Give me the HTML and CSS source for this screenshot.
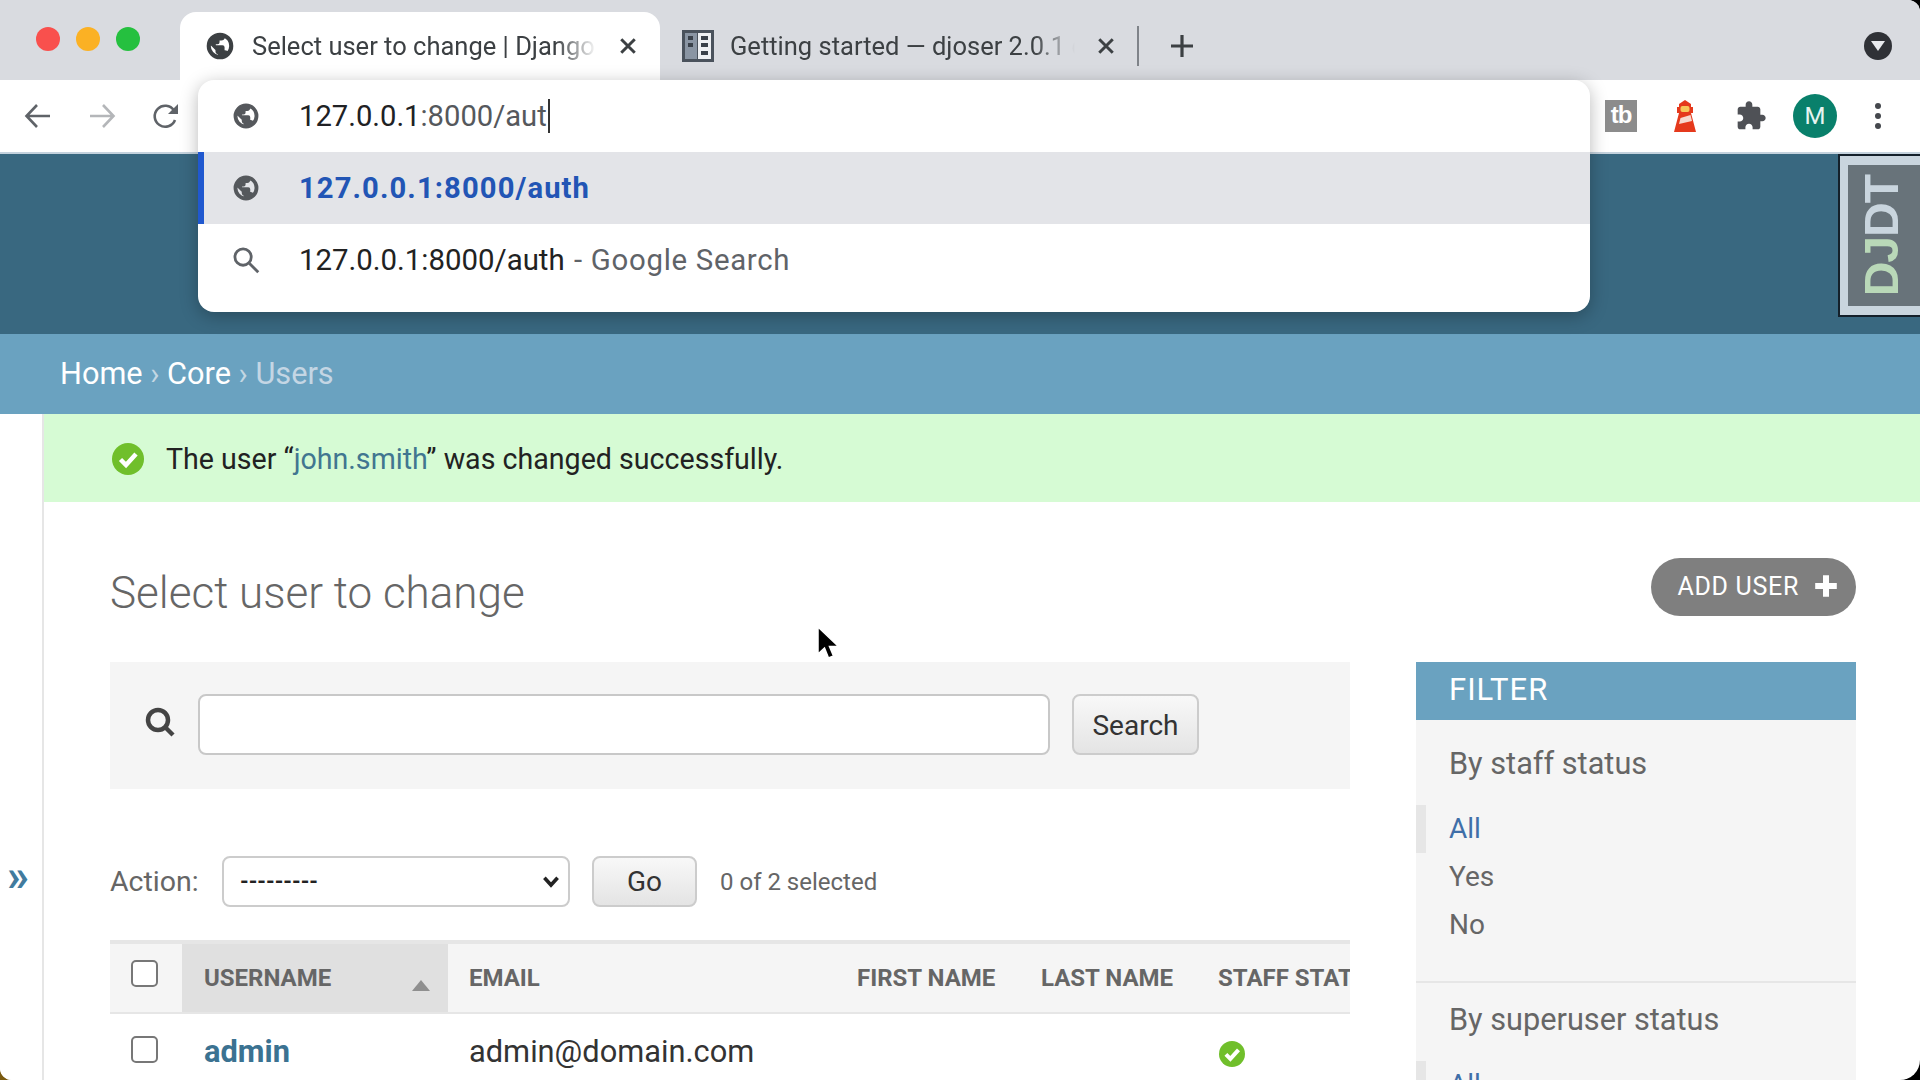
FILE: index.html
```html
<!DOCTYPE html>
<html lang="en">
<head>
  <meta charset="UTF-8">
  <title>Select user to change | Django site admin</title>
  <link rel="stylesheet" href="styles.css">
</head>
<body>
  <div class="window">
    <!-- browser tabs -->
    <div class="tabstrip">
      <div class="lights">
        <span class="light red"></span><span class="light yellow"></span><span class="light green"></span>
      </div>
      <div class="tab active">
        <svg class="globe" viewBox="0 0 24 24"><path d="M12 2C6.48 2 2 6.48 2 12s4.48 10 10 10 10-4.48 10-10S17.52 2 12 2zm-1 17.93c-3.95-.49-7-3.85-7-7.93 0-.62.08-1.21.21-1.79L9 15v1c0 1.1.9 2 2 2v1.93zm6.9-2.54c-.26-.81-1-1.39-1.9-1.39h-1v-3c0-.55-.45-1-1-1H8v-2h2c.55 0 1-.45 1-1V7h2c1.1 0 2-.9 2-2v-.41c2.93 1.19 5 4.06 5 7.41 0 2.08-.8 3.97-2.1 5.39z"/></svg>
        <span class="tab-title">Select user to change | Django site admin</span>
        <svg class="tab-close" viewBox="0 0 16 16"><path d="M2 2l12 12M14 2L2 14"/></svg>
      </div>
      <div class="tab other">
        <svg class="book" viewBox="0 0 32 32"><rect width="32" height="32" fill="#4a525c"/><rect x="3" y="3" width="12" height="26" fill="#8a95a3"/><rect x="16" y="3" width="13" height="26" fill="#eef0f3"/><rect x="6" y="6" width="5" height="4" fill="#3a414a"/><rect x="6" y="13" width="5" height="4" fill="#3a414a"/><rect x="19" y="6" width="7" height="4" fill="#3a414a"/><rect x="19" y="13" width="7" height="4" fill="#3a414a"/><rect x="19" y="21" width="7" height="4" fill="#3a414a"/></svg>
        <span class="tab-title">Getting started — djoser 2.0.1 documentation</span>
        <svg class="tab-close" viewBox="0 0 16 16"><path d="M2 2l12 12M14 2L2 14"/></svg>
      </div>
      <span class="tab-sep"></span>
      <svg class="new-tab" viewBox="0 0 24 24"><path d="M12 1v22M1 12h22"/></svg>
      <span class="tab-search"><svg viewBox="0 0 14 10"><path d="M0 0h14L7 10z"/></svg></span>
    </div>

    <!-- toolbar -->
    <div class="toolbar">
      <svg class="nav back" viewBox="0 0 28 28"><path d="M26 14H3M13 3L2.5 14 13 25"/></svg>
      <svg class="nav forward" viewBox="0 0 28 28"><path d="M2 14h23M15 3l10.5 11L15 25"/></svg>
      <svg class="nav reload" viewBox="0 0 28 28"><path d="M23 18a10.5 10.5 0 1 1-1-9.5"/><path class="fill" d="M26 2v10H16z"/></svg>
      <div class="extensions">
        <span class="ext-tb">tb</span>
        <svg class="ext-light" viewBox="0 0 22 32"><path fill="#e5391c" d="M11 0l6 4v3h2v6h-2l5 19H0L5 13H3V7h2V4z"/><rect x="6.5" y="6" width="9" height="6" rx="2" fill="#f7c65a"/><path fill="#f6d9cf" d="M5 24l1.5-6 10-3 1.5 6z"/></svg>
        <svg class="ext-puzzle" viewBox="0 0 24 24"><path d="M20.5 11H19V7c0-1.1-.9-2-2-2h-4V3.5C13 2.12 11.88 1 10.5 1S8 2.12 8 3.5V5H4c-1.1 0-1.99.9-1.99 2v3.8H3.5c1.49 0 2.7 1.21 2.7 2.7s-1.21 2.7-2.7 2.7H2V20c0 1.1.9 2 2 2h3.8v-1.5c0-1.49 1.21-2.7 2.7-2.7 1.49 0 2.7 1.21 2.7 2.7V22H17c1.1 0 2-.9 2-2v-4h1.5c1.38 0 2.5-1.12 2.5-2.5S21.88 11 20.5 11z"/></svg>
        <span class="avatar">M</span>
        <span class="kebab"><i></i><i></i><i></i></span>
      </div>
    </div>

    <!-- omnibox dropdown -->
    <div class="omnibox">
      <div class="omni-row omni-input">
        <svg class="globe" viewBox="0 0 24 24"><path d="M12 2C6.48 2 2 6.48 2 12s4.48 10 10 10 10-4.48 10-10S17.52 2 12 2zm-1 17.93c-3.95-.49-7-3.85-7-7.93 0-.62.08-1.21.21-1.79L9 15v1c0 1.1.9 2 2 2v1.93zm6.9-2.54c-.26-.81-1-1.39-1.9-1.39h-1v-3c0-.55-.45-1-1-1H8v-2h2c.55 0 1-.45 1-1V7h2c1.1 0 2-.9 2-2v-.41c2.93 1.19 5 4.06 5 7.41 0 2.08-.8 3.97-2.1 5.39z"/></svg>
        <span class="omni-text"><b>127.0.0.1</b>:8000/aut</span><span class="caret"></span>
      </div>
      <div class="omni-row omni-selected">
        <svg class="globe" viewBox="0 0 24 24"><path d="M12 2C6.48 2 2 6.48 2 12s4.48 10 10 10 10-4.48 10-10S17.52 2 12 2zm-1 17.93c-3.95-.49-7-3.85-7-7.93 0-.62.08-1.21.21-1.79L9 15v1c0 1.1.9 2 2 2v1.93zm6.9-2.54c-.26-.81-1-1.39-1.9-1.39h-1v-3c0-.55-.45-1-1-1H8v-2h2c.55 0 1-.45 1-1V7h2c1.1 0 2-.9 2-2v-.41c2.93 1.19 5 4.06 5 7.41 0 2.08-.8 3.97-2.1 5.39z"/></svg>
        <span class="omni-text">127.0.0.1:8000/auth</span>
      </div>
      <div class="omni-row omni-search">
        <svg class="omni-glass" viewBox="0 0 24 24"><circle cx="9.5" cy="9.5" r="7"/><path d="M15 15l7.5 7.5"/></svg>
        <span class="omni-text">127.0.0.1:8000/auth <span class="omni-dim">- Google Search</span></span>
      </div>
    </div>

    <!-- django admin -->
    <div class="site-header"></div>
    <div class="breadcrumbs"><a>Home</a> <i>›</i> <a>Core</a> <i>›</i> <span>Users</span></div>

    <div class="page">
      <div class="nav-toggle"><span>»</span></div>
      <div class="content">
        <div class="message">
          <svg class="yes-icon" viewBox="0 0 32 32"><circle cx="16" cy="16" r="16" fill="#70bf2b"/><path d="M8.5 16.5l5.5 5.5 10-11" fill="none" stroke="#fff" stroke-width="4.5"/></svg>
          <span>The user “<a>john.smith</a>” was changed successfully.</span>
        </div>

        <div class="inner">
          <div class="title-row">
            <h1>Select user to change</h1>
            <a class="add-user">ADD USER <svg viewBox="0 0 20 20"><path d="M10 1v18M1 10h18"/></svg></a>
          </div>

          <div class="changelist">
            <div class="results">
              <div class="search-panel">
                <svg class="search-icon" viewBox="0 0 30 30"><circle cx="13" cy="13" r="10"/><path d="M20 20l8 8"/></svg>
                <div class="search-input"></div>
                <div class="button search-btn">Search</div>
              </div>

              <div class="actions">
                <label>Action:</label>
                <div class="select">---------<svg viewBox="0 0 14 10"><path d="M1.5 1.5L7 7.5l5.5-6"/></svg></div>
                <div class="button go-btn">Go</div>
                <span class="counter">0 of 2 selected</span>
              </div>

              <div class="table-wrap">
                <table>
                  <colgroup>
                    <col class="col-check"><col class="col-user"><col class="col-email"><col class="col-first"><col class="col-last"><col class="col-staff">
                  </colgroup>
                  <thead>
                    <tr>
                      <th class="cell-check"><span class="checkbox"></span></th>
                      <th class="sorted">USERNAME<span class="sort-arrow"></span></th>
                      <th>EMAIL</th>
                      <th>FIRST NAME</th>
                      <th>LAST NAME</th>
                      <th>STAFF STATUS</th>
                    </tr>
                  </thead>
                  <tbody>
                    <tr>
                      <td class="cell-check"><span class="checkbox"></span></td>
                      <td><a class="user-link">admin</a></td>
                      <td>admin@domain.com</td>
                      <td></td>
                      <td></td>
                      <td class="cell-staff"><svg class="yes-small" viewBox="0 0 32 32"><circle cx="16" cy="16" r="16" fill="#70bf2b"/><path d="M8.5 16.5l5.5 5.5 10-11" fill="none" stroke="#fff" stroke-width="5"/></svg></td>
                    </tr>
                  </tbody>
                </table>
              </div>
            </div>

            <div class="filter">
              <h2>FILTER</h2>
              <div class="filter-group">
                <h3>By staff status</h3>
                <ul>
                  <li class="selected"><a>All</a></li>
                  <li>Yes</li>
                  <li>No</li>
                </ul>
              </div>
              <div class="filter-group last">
                <h3>By superuser status</h3>
                <ul>
                  <li class="selected"><a>All</a></li>
                </ul>
              </div>
            </div>
          </div>
        </div>
      </div>
    </div>

    <div class="djdt"><div class="djdt-inner"><span><em>DJ</em>DT</span></div></div>
    <svg class="cursor" viewBox="0 0 24 36"><path d="M2 1v27l6.5-6 4 10 5-2-4-9.5h9z" fill="#000" stroke="#fff" stroke-width="1.5"/></svg>
  </div>
</body>
</html>
```

FILE: styles.css
```css
* {
  box-sizing: border-box;
}

html, body {
  margin: 0;
  height: 100%;
  overflow: hidden;
}

body {
  background: linear-gradient(to right, #7a5a10 50%, #000 50%);
  font-family: Roboto, "Liberation Sans", sans-serif;
}

.window {
  position: relative;
  width: 1920px;
  height: 1080px;
  background: #fff;
  overflow: hidden;
  border-radius: 0 12px 20px 12px;
}

/* tabs */
.tabstrip {
  display: flex;
  align-items: flex-end;
  height: 80px;
  background: #d9dbe0;
}

.lights {
  display: flex;
  gap: 16px;
  align-self: flex-start;
  width: 180px;
  padding: 27px 0 0 36px;
}

.light {
  width: 24px;
  height: 24px;
  border-radius: 50%;
}

.red { background: #f9504d; }
.yellow { background: #fbb124; }
.green { background: #25c03f; }

.tab {
  display: flex;
  align-items: center;
  height: 68px;
  font-size: 25.5px;
  color: #3c4043;
}

.tab.active {
  width: 480px;
  padding: 0 23px 0 25px;
  background: #fff;
  border-radius: 16px 16px 0 0;
}

.tab.other {
  width: 477px;
  padding: 0 22px 0 22px;
}

.globe {
  width: 30px;
  height: 30px;
  flex: none;
  fill: #3c4043;
  stroke: #3c4043;
  stroke-width: 1.3;
}

.book {
  width: 32px;
  height: 32px;
  flex: none;
}

.tab-title {
  flex: 1;
  margin-left: 17px;
  overflow: hidden;
  white-space: nowrap;
  -webkit-mask-image: linear-gradient(to right, #000 88%, transparent 100%);
  mask-image: linear-gradient(to right, #000 88%, transparent 100%);
}

.tab.other .tab-title {
  margin-left: 16px;
}

.tab-close {
  width: 18px;
  height: 18px;
  margin-left: 22px;
  flex: none;
  fill: none;
  stroke: #3c4043;
  stroke-width: 2.6;
}

.tab-sep {
  width: 2px;
  height: 40px;
  margin-bottom: 14px;
  background: #7f8389;
}

.new-tab {
  width: 24px;
  height: 24px;
  margin: 0 0 22px 31px;
  fill: none;
  stroke: #3c4043;
  stroke-width: 3.2;
}

.tab-search {
  display: flex;
  align-items: center;
  justify-content: center;
  width: 28px;
  height: 28px;
  margin: 0 28px 20px auto;
  background: #2f3136;
  border-radius: 50%;
}

.tab-search svg {
  width: 14px;
  height: 10px;
  fill: #e8eaed;
}

/* toolbar */
.toolbar {
  display: flex;
  align-items: center;
  height: 74px;
  padding: 0 0 0 24px;
  background: #fff;
  border-bottom: 2px solid #c4d2dd;
}

.nav {
  width: 28px;
  height: 28px;
  margin-right: 36px;
  fill: none;
  stroke: #5f6368;
  stroke-width: 2.6;
}

.nav.forward { stroke: #b4b6b9; }
.nav .fill { fill: #5f6368; stroke: none; }

.extensions {
  display: flex;
  align-items: center;
  margin-left: auto;
}

.ext-tb {
  width: 32px;
  height: 32px;
  margin-right: 37px;
  background: #8c8c8c;
  color: #fff;
  font: 700 24px/30px "Liberation Sans", sans-serif;
  letter-spacing: -1px;
  text-align: center;
}

.ext-light {
  width: 22px;
  height: 32px;
  margin-right: 39px;
}

.ext-puzzle {
  width: 32px;
  height: 32px;
  margin-right: 26px;
  fill: #4f5156;
}

.avatar {
  width: 44px;
  height: 44px;
  margin-right: 36px;
  background: #09806b;
  border-radius: 50%;
  color: #e6f4f0;
  font-size: 24px;
  line-height: 44px;
  text-align: center;
}

.kebab {
  display: flex;
  flex-direction: column;
  gap: 4px;
  width: 47px;
  padding-left: 2px;
}

.kebab i {
  width: 6px;
  height: 6px;
  background: #45484d;
  border-radius: 50%;
}

/* omnibox suggestions sit over the page */
.omnibox {
  position: absolute;
  left: 198px;
  top: 80px;
  width: 1392px;
  height: 232px;
  background: #fff;
  border-radius: 16px;
  box-shadow: 0 4px 18px rgba(0, 0, 0, 0.28);
  overflow: hidden;
}

.omni-row {
  display: flex;
  align-items: center;
  height: 72px;
  padding-left: 34px;
  font-size: 29.2px;
  color: #222;
}

.omni-row .globe {
  width: 28px;
  height: 28px;
  fill: #55585c;
  stroke: #55585c;
}

.omni-text {
  margin-left: 39px;
  white-space: nowrap;
}

.omni-input .omni-text {
  color: #55585c;
}

.omni-input b {
  font-weight: 400;
  color: #202124;
}

.caret {
  width: 2px;
  height: 34px;
  margin-left: 1px;
  background: #333;
}

.omni-selected {
  background: #e3e4e8;
  border-left: 6px solid #2058cf;
  padding-left: 28px;
}

.omni-selected .omni-text {
  color: #2255b5;
  font-weight: 700;
  letter-spacing: 1.1px;
}

.omni-search {
  height: 72px;
  font-size: 29.4px;
}

.omni-glass {
  width: 28px;
  height: 28px;
  fill: none;
  stroke: #5f6368;
  stroke-width: 2.4;
}

.omni-dim {
  color: #5f6368;
  margin-left: 2px;
  letter-spacing: 0.7px;
}

/* admin header */
.site-header {
  height: 180px;
  background: #396880;
}

.breadcrumbs {
  height: 80px;
  padding: 0 60px;
  background: #6aa2c0;
  font-size: 30.7px;
  line-height: 80px;
  color: #fff;
}

.breadcrumbs i {
  font-style: normal;
  color: #c3d7e3;
}

.breadcrumbs span {
  color: #c4d6e4;
}

.page {
  display: flex;
  height: 666px;
}

.nav-toggle {
  width: 44px;
  flex: none;
  padding: 432px 0 0 7px;
  background: #fff;
  border-right: 2px solid #e6e6e6;
  font-size: 44px;
  line-height: 60px;
  font-weight: 700;
  color: #417b9e;
}

.content {
  flex: 1;
  min-width: 0;
}

.message {
  display: flex;
  align-items: center;
  height: 88px;
  padding: 1px 0 0 68px;
  background: #d6fbd4;
  font-size: 28.6px;
  color: #222;
}

.message a {
  color: #417690;
}

.yes-icon {
  width: 32px;
  height: 32px;
  margin-right: 22px;
}

.inner {
  padding: 56px 64px 0 66px;
}

.title-row {
  display: flex;
  justify-content: space-between;
  align-items: center;
  height: 58px;
  margin-bottom: 46px;
}

h1 {
  margin: 0;
  padding-top: 12px;
  font-size: 44px;
  font-weight: 300;
  color: #666;
}

.add-user {
  display: flex;
  align-items: center;
  gap: 15px;
  height: 58px;
  padding: 0 18px 2px 26px;
  background: #7f7f7f;
  border-radius: 29px;
  font-size: 25px;
  letter-spacing: 0.7px;
  color: #fff;
}

.add-user svg {
  width: 24px;
  height: 24px;
  fill: none;
  stroke: #fff;
  stroke-width: 5;
}

.changelist {
  display: flex;
  gap: 66px;
}

.results {
  width: 1240px;
  flex: none;
}

.search-panel {
  display: flex;
  align-items: flex-start;
  height: 127px;
  padding: 32px 0 0 34px;
  background: #f5f5f5;
}

.search-icon {
  width: 30px;
  height: 30px;
  margin: 13px 23px 0 1px;
  fill: none;
  stroke: #444;
  stroke-width: 4.5;
}

.search-input {
  width: 852px;
  height: 61px;
  background: #fff;
  border: 2px solid #c8c8c8;
  border-radius: 8px;
}

.button {
  border: 2px solid #ccc;
  border-radius: 8px;
  background: linear-gradient(to bottom, #f8f8f8, #e4e4e4);
  color: #333;
  font-size: 28px;
  text-align: center;
}

.search-btn {
  width: 127px;
  height: 61px;
  margin-left: 22px;
  line-height: 60px;
}

.actions {
  display: flex;
  align-items: center;
  height: 51px;
  margin-top: 67px;
}

.actions label {
  width: 112px;
  font-size: 28.5px;
  color: #666;
}

.select {
  display: flex;
  align-items: center;
  justify-content: space-between;
  width: 348px;
  height: 51px;
  padding: 0 8px 0 16px;
  background: #fff;
  border: 2px solid #ccc;
  border-radius: 8px;
  font-size: 22px;
  font-weight: 700;
  color: #222;
}

.select svg {
  width: 18px;
  height: 12px;
  fill: none;
  stroke: #222;
  stroke-width: 3;
}

.go-btn {
  width: 105px;
  height: 51px;
  margin-left: 22px;
  line-height: 48px;
}

.counter {
  margin-left: 23px;
  font-size: 24px;
  color: #666;
}

.table-wrap {
  margin-top: 33px;
  overflow: hidden;
}

table {
  width: 1247px;
  table-layout: fixed;
  border-collapse: collapse;
}

.col-check { width: 72px; }
.col-user { width: 266px; }
.col-email { width: 388px; }
.col-first { width: 184px; }
.col-last { width: 177px; }
.col-staff { width: 160px; }

thead tr {
  background: #f5f5f5;
}

th {
  position: relative;
  height: 71px;
  padding: 0 0 0 21px;
  border-top: 4px solid #e6e6e6;
  border-bottom: 2px solid #e6e6e6;
  font-size: 24px;
  font-weight: 700;
  text-align: left;
  white-space: nowrap;
  color: #666;
}

th.sorted {
  padding-left: 22px;
  background: #e0e0e0;
}

th.cell-check, td.cell-check {
  padding: 0 0 0 21px;
}

.sort-arrow {
  position: absolute;
  right: 18px;
  top: 36px;
  border-left: 9px solid transparent;
  border-right: 9px solid transparent;
  border-bottom: 11px solid #8f8f8f;
}

.checkbox {
  display: block;
  width: 27px;
  height: 27px;
  background: #fff;
  border: 2px solid #777;
  border-radius: 5px;
}

th.cell-check .checkbox {
  margin-top: -10px;
}

td.cell-check .checkbox {
  margin-top: -4px;
}

td {
  height: 76px;
  padding: 0 0 0 21px;
  font-size: 30.8px;
  color: #333;
}

.user-link {
  margin-left: 1px;
  font-weight: 700;
  color: #3b7291;
}

.yes-small {
  display: block;
  width: 26px;
  height: 26px;
  margin: 5px 0 0 1px;
}

/* filter */
.filter {
  width: 440px;
  flex: none;
  height: 500px;
  background: #f5f5f5;
}

.filter h2 {
  margin: 0;
  height: 58px;
  padding-left: 33px;
  background: #6aa2c0;
  font-size: 31px;
  font-weight: 400;
  line-height: 55px;
  letter-spacing: 1px;
  color: #fff;
}

.filter-group {
  padding-bottom: 32px;
  border-bottom: 2px solid #e6e6e6;
}

.filter-group.last {
  border-bottom: 0;
}

.filter-group.last h3 {
  padding-top: 17px;
}

.filter h3 {
  margin: 0;
  padding: 24px 0 0 33px;
  font-size: 30.7px;
  font-weight: 400;
  line-height: 40px;
  color: #666;
}

.filter ul {
  margin: 21px 0 0;
  padding: 0;
  list-style: none;
}

.filter li {
  height: 48px;
  padding-left: 33px;
  font-size: 28px;
  line-height: 48px;
  color: #666;
}

.filter li.selected {
  padding-left: 23px;
  border-left: 10px solid #e6e6e6;
}

.filter li a {
  color: #3f6fa8;
}

/* debug toolbar handle and pointer float over the page */
.djdt {
  position: absolute;
  right: 0;
  top: 154px;
  width: 82px;
  height: 163px;
  padding: 9px 0 9px 8px;
  background: #c9d5de;
  border: 2px solid #14202a;
  border-right: 0;
}

.djdt-inner {
  display: flex;
  align-items: center;
  justify-content: center;
  height: 100%;
  padding-right: 4px;
  background: #68737a;
}

.djdt span {
  writing-mode: vertical-rl;
  transform: rotate(180deg);
  font: 700 48px/1 "Liberation Sans", sans-serif;
  letter-spacing: -1px;
  color: #c9d5de;
}

.djdt em {
  font-style: normal;
  color: #b9d8b8;
}

.cursor {
  position: absolute;
  left: 816px;
  top: 626px;
  width: 24px;
  height: 36px;
}
```
